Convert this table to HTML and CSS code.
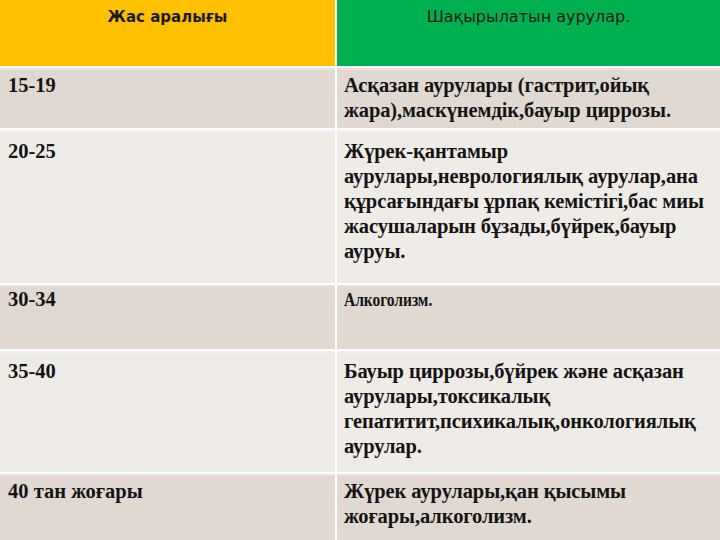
FILE: index.html
```html
<!DOCTYPE html>
<html>
<head>
<meta charset="utf-8">
<link rel="stylesheet" href="styles.css">
</head>
<body>
<div class="table">
  <div class="cell head age">Жас аралығы</div>
  <div class="cell head dis">Шақырылатын аурулар.</div>

  <div class="cell odd r1">15-19</div>
  <div class="cell odd r1 txt">Асқазан аурулары (гастрит,ойық<br>жара),маскүнемдік,бауыр циррозы.</div>

  <div class="cell even r2">20-25</div>
  <div class="cell even r2 txt">Жүрек-қантамыр<br>аурулары,неврологиялық аурулар,ана<br>құрсағындағы ұрпақ кемістігі,бас миы<br>жасушаларын бұзады,бүйрек,бауыр<br>ауруы.</div>

  <div class="cell odd r3">30-34</div>
  <div class="cell odd r3 txt"><span class="narrow">Алкоголизм.</span></div>

  <div class="cell even r4">35-40</div>
  <div class="cell even r4 txt">Бауыр циррозы,бүйрек және асқазан<br>аурулары,токсикалық<br>гепатитит,психикалық,онкологиялық<br>аурулар.</div>

  <div class="cell odd r5">40 тан жоғары</div>
  <div class="cell odd r5 txt">Жүрек аурулары,қан қысымы<br>жоғары,алкоголизм.</div>
</div>
</body>
</html>
```

FILE: styles.css
```css
html, body {
  margin: 0;
  padding: 0;
  background: #ffffff;
}
.table {
  width: 720px;
  height: 540px;
  display: grid;
  grid-template-columns: 335px 383px;
  grid-template-rows: 66px 60px 153px 64px 121px 66px;
  column-gap: 2px;
  row-gap: 2px;
  overflow: hidden;
}
.cell {
  font-family: "Liberation Serif", "Times New Roman", serif;
  font-weight: bold;
  font-size: 20.5px;
  line-height: 25px;
  color: #141414;
  padding: 3px 8px 0 8px;
  box-sizing: border-box;
  white-space: nowrap;
  overflow: hidden;
}
.cell.txt {
  padding-left: 7px;
  padding-right: 0;
  letter-spacing: -0.1px;
}
.narrow {
  display: inline-block;
  font-size: 19px;
  transform: scaleX(0.82);
  transform-origin: left center;
}
.r2 { padding-top: 7px; }
.r3 { padding-top: 0; }
.r4 { padding-top: 6px; }
.head {
  font-family: "DejaVu Sans", Verdana, sans-serif;
  line-height: 22px;
  text-align: center;
  padding-top: 6px;
  color: #1a1a1a;
}
.age {
  background: #ffc000;
  font-weight: bold;
  font-size: 15px;
}
.dis {
  background: #00b050;
  font-weight: normal;
  font-size: 16px;
}
.odd {
  background: #e0d8d1;
  border-top: 2px solid #e9e3de;
}
.even {
  background: #efebe7;
  border-top: 2px solid #f5f2ef;
}
```
